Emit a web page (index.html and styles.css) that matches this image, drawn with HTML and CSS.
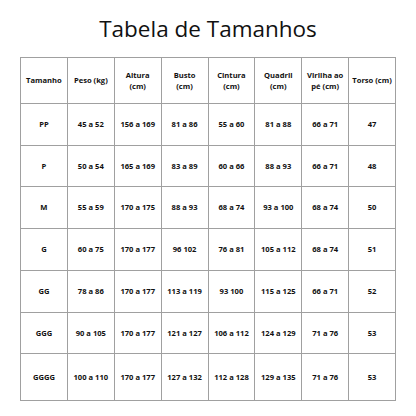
FILE: index.html
```html
<!DOCTYPE html>
<html lang="pt">
<head>
<meta charset="utf-8">
<link rel="stylesheet" href="styles.css">
</head>
<body>
<div class="page">
  <h1 class="title">Tabela de Tamanhos</h1>
  <table class="sizes">
    <thead>
      <tr class="head">
        <th>Tamanho</th>
        <th>Peso (kg)</th>
        <th>Altura<br>(cm)</th>
        <th>Busto<br>(cm)</th>
        <th>Cintura<br>(cm)</th>
        <th>Quadril<br>(cm)</th>
        <th>Virilha ao<br>pé (cm)</th>
        <th>Torso (cm)</th>
      </tr>
    </thead>
    <tbody>
      <tr class="r1"><td>PP</td><td>45 a 52</td><td>156 a 169</td><td>81 a 86</td><td>55 a 60</td><td>81 a 88</td><td>66 a 71</td><td>47</td></tr>
      <tr class="r2"><td>P</td><td>50 a 54</td><td>165 a 169</td><td>83 a 89</td><td>60 a 66</td><td>88 a 93</td><td>66 a 71</td><td>48</td></tr>
      <tr class="r3"><td>M</td><td>55 a 59</td><td>170 a 175</td><td>88 a 93</td><td>68 a 74</td><td>93 a 100</td><td>68 a 74</td><td>50</td></tr>
      <tr class="r4"><td>G</td><td>60 a 75</td><td>170 a 177</td><td>96 102</td><td>76 a 81</td><td>105 a 112</td><td>68 a 74</td><td>51</td></tr>
      <tr class="r5"><td>GG</td><td>78 a 86</td><td>170 a 177</td><td>113 a 119</td><td>93 100</td><td>115 a 125</td><td>66 a 71</td><td>52</td></tr>
      <tr class="r6"><td>GGG</td><td>90 a 105</td><td>170 a 177</td><td>121 a 127</td><td>106 a 112</td><td>124 a 129</td><td>71 a 76</td><td>53</td></tr>
      <tr class="r7"><td>GGGG</td><td>100 a 110</td><td>170 a 177</td><td>127 a 132</td><td>112 a 128</td><td>129 a 135</td><td>71 a 76</td><td>53</td></tr>
    </tbody>
  </table>
</div>
</body>
</html>
```
FILE: styles.css
```css
html, body {
  margin: 0;
  padding: 0;
  background: #ffffff;
}
.page {
  width: 416px;
  height: 416px;
  padding-top: 14px;
  box-sizing: border-box;
  font-family: "Open Sans", "Liberation Sans", sans-serif;
  color: #111111;
}
.title {
  margin: 0;
  height: 30px;
  line-height: 30px;
  font-size: 22.5px;
  font-weight: 400;
  text-align: center;
  color: #111111;
}
.sizes {
  margin: 13px 0 0 20px;
  width: 376px;
  border-collapse: collapse;
  table-layout: fixed;
}
.sizes th,
.sizes td {
  border: 1px solid #a0a0a0;
  padding: 0;
  text-align: center;
  vertical-align: middle;
  font-size: 7.6px;
  font-weight: 700;
  line-height: 11px;
  color: #111111;
}
.head { height: 46px; }
.r1 { height: 42px; }
.r2 { height: 41px; }
.r3 { height: 42px; }
.r4 { height: 42px; }
.r5 { height: 42px; }
.r6 { height: 41px; }
.r7 { height: 47px; }
```
